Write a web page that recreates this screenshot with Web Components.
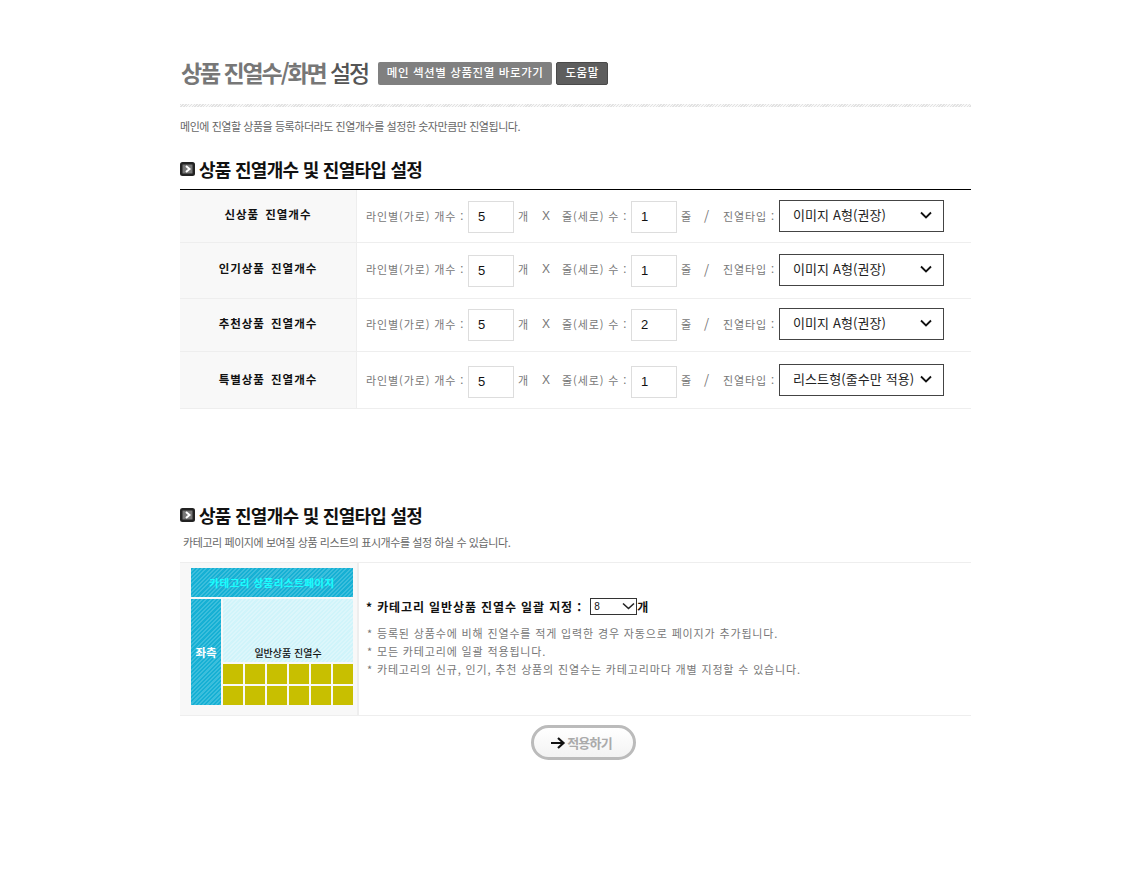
<!DOCTYPE html>
<html lang="ko">
<head>
<meta charset="utf-8">
<title>상품 진열수/화면 설정</title>
<style>
	html, body { margin: 0; background: #fff; }
	body { font-family: "Noto Sans CJK KR", sans-serif; font-size: 11px; color: #666; }
	display-settings { display: block; width: 791px; margin: 0 0 0 180px; padding-top: 58px; }
</style>
</head>
<body>
<display-settings>
	<page-title>
		<span>상품 진열수/화면</span> <b>설정</b>
	</page-title>
	<section-head>상품 진열개수 및 진열타입 설정</section-head>
	<count-row label="신상품 진열개수" a="5" b="1" type="이미지 A형(권장)" h="52"></count-row>
	<count-row label="인기상품 진열개수" a="5" b="1" type="이미지 A형(권장)" h="55" lift="2" np="6"></count-row>
	<count-row label="추천상품 진열개수" a="5" b="2" type="이미지 A형(권장)" h="52" lift="2"></count-row>
	<count-row label="특별상품 진열개수" a="5" b="1" type="리스트형(줄수만 적용)" h="56" drop="4" np="2"></count-row>
	<section-head second>상품 진열개수 및 진열타입 설정</section-head>
	<category-box></category-box>
	<apply-button>적용하기</apply-button>
</display-settings>

<script>
class PageTitle extends HTMLElement {
	connectedCallback() {
		this.attachShadow({ mode: 'open' })
		this.shadowRoot.innerHTML = `
		<style>
			:host { display: block; }
			.top { display: flex; align-items: center; height: 30px; }
			h1 { margin: -2px 10px 0 1px; font-size: 23px; font-weight: 700; letter-spacing: -2.1px; color: #777; line-height: 30px; white-space: nowrap; }
			::slotted(b) { font-weight: 500; color: #555; }
			.btn { height: 23px; line-height: 21px; box-sizing: border-box; border-radius: 2px; color: #fff; font-size: 11.5px; font-weight: 500; text-align: center; background: #808080; letter-spacing: .6px; white-space: nowrap; }
			.b1 { width: 174px; }
			.b2 { width: 52px; margin-left: 4px; background: #5e5e5e; border: 1px solid #4a4a4a; line-height: 19px; letter-spacing: .5px; }
			.dots { height: 3px; margin-top: 16px; background: repeating-linear-gradient(135deg, #e2e2e2 0 1px, #f8f8f8 1px 2px); }
			p { margin: 11px 0 0; font-size: 11px; line-height: 16px; letter-spacing: -.45px; color: #666; }
		</style>
		<div class="top">
			<h1><slot></slot></h1>
			<div class="btn b1">메인 섹션별 상품진열 바로가기</div>
			<div class="btn b2">도움말</div>
		</div>
		<div class="dots"></div>
		<p>메인에 진열할 상품을 등록하더라도 진열개수를 설정한 숫자만큼만 진열됩니다.</p>`
	}
}
class SectionHead extends HTMLElement {
	connectedCallback() {
		this.attachShadow({ mode: 'open' })
		const second = this.hasAttribute('second')
		this.shadowRoot.innerHTML = `
		<style>
			:host { display: block; margin-top: ${second ? 93 : 22}px; }
			.head { display: flex; align-items: center; height: 26px; gap: 4px; }
			svg { flex: none; }
			h2 { margin: 0; font-size: 18px; font-weight: 700; letter-spacing: -.72px; color: #111; line-height: 26px; }
			.rule { height: 1px; background: #000; margin-top: 7px; }
			p { margin: 6px 0 12px 3px; font-size: 11px; line-height: 16px; letter-spacing: -.42px; color: #666; }
		</style>
		<div class="head">
			<svg width="15" height="14" viewBox="0 0 15 14"><rect width="15" height="14" rx="2.5" fill="#222"/><rect x="2.5" y="2.5" width="10" height="9" fill="#777"/><path d="M6 4l3.5 3L6 10" fill="none" stroke="#fff" stroke-width="2"/></svg>
			<h2><slot></slot></h2>
		</div>
		${second ? '<p>카테고리 페이지에 보여질 상품 리스트의 표시개수를 설정 하실 수 있습니다.</p>' : '<div class="rule"></div>'}`
	}
}
class NumBox extends HTMLElement {
	connectedCallback() {
		this.attachShadow({ mode: 'open' })
		this.shadowRoot.innerHTML = `
		<style>
			:host { display: block; flex: none; width: 46px; height: 32px; box-sizing: border-box; border: 1px solid #ddd; font: 13px "Liberation Sans", sans-serif; color: #111; line-height: 29px; padding: 0 0 0 9px; letter-spacing: 0; }
		</style><slot></slot>`
	}
}
class TypeSelect extends HTMLElement {
	connectedCallback() {
		this.attachShadow({ mode: 'open' })
		this.shadowRoot.innerHTML = `
		<style>
			:host { display: flex; flex: none; align-items: center; justify-content: space-between; width: 165px; height: 32px; box-sizing: border-box; border: 1px solid #444; padding: 0 11px 0 13px; font-size: 13px; color: #222; white-space: nowrap; letter-spacing: .1px; }
			span { margin-top: -3px; }
			svg { flex: none; margin-left: 2px; margin-top: -2px; }
		</style>
		<span><slot></slot></span>
		<svg width="12" height="8" viewBox="0 0 12 8"><path d="M1 1.5l5 5 5-5" fill="none" stroke="#111" stroke-width="1.8"/></svg>`
	}
}
class CountRow extends HTMLElement {
	connectedCallback() {
		this.attachShadow({ mode: 'open' })
		const g = n => this.getAttribute(n)
		const drop = g('drop') || 2
		this.shadowRoot.innerHTML = `
		<style>
			:host { display: flex; height: ${g('h')}px; box-sizing: content-box; border-bottom: 1px solid #eee; }
			.name { flex: none; width: 177px; box-sizing: border-box; background: #f8f8f8; border-right: 1px solid #eee; text-align: center; font-size: 11.5px; font-weight: 700; color: #111; letter-spacing: .95px; display: flex; align-items: center; justify-content: center; padding-bottom: ${g('np') || 4}px; word-spacing: 2px; }
			.cells { display: flex; align-items: center; padding: 0 0 ${g('lift') || 0}px 9px; font-size: 11px; letter-spacing: .9px; color: #777; white-space: nowrap; }
			.cells > span { margin-top: -1px; }
			num-box { margin-top: ${drop}px; }
			.l1 { width: 102px; }
			.u1 { margin-left: 4px; width: 24px; }
			.x { width: 20px; font: 300 12px "Liberation Sans", sans-serif; letter-spacing: 0; }
			.l2 { width: 69px; }
			.u2 { margin-left: 4px; width: 23px; }
			.s { width: 19px; font-size: 13px; }
			.l3 { width: 56px; }
		</style>
		<div class="name">${g('label')}</div>
		<div class="cells">
			<span class="l1">라인별(가로) 개수 :</span><num-box>${g('a')}</num-box>
			<span class="u1">개</span><span class="x">X</span>
			<span class="l2">줄(세로) 수 :</span><num-box>${g('b')}</num-box>
			<span class="u2">줄</span><span class="s">/</span>
			<span class="l3">진열타입 :</span><type-select>${g('type')}</type-select>
		</div>`
	}
}
class LayoutDiagram extends HTMLElement {
	connectedCallback() {
		this.attachShadow({ mode: 'open' })
		const cells = Array(12).fill('<i></i>').join('')
		this.shadowRoot.innerHTML = `
		<style>
			:host { display: grid; width: 162px; height: 137px; grid-template-columns: 30px 1fr; grid-template-rows: 29px 1fr; gap: 2px; color: #fff; font-size: 11.5px; font-weight: 700; }
			.blue { background: repeating-linear-gradient(135deg, #16b0d4 0 1.5px, #3cbedc 1.5px 3px); display: flex; align-items: center; justify-content: center; }
			.top { grid-column: 1 / 3; color: #19ffff; font-size: 10.5px; letter-spacing: .5px; }
			.main { display: grid; grid-template-rows: 63px 1fr; gap: 2px; }
			.light { background: repeating-linear-gradient(135deg, #d0f4fa 0 1.5px, #dcf6fb 1.5px 3px); color: #111; font-weight: 500; font-size: 10px; display: flex; align-items: flex-end; justify-content: center; padding-bottom: 2px; }
			.grid { display: grid; grid-template-columns: repeat(6, 1fr); grid-template-rows: 1fr 1fr; gap: 2px; }
			i { background: #c8bf00; display: block; }
		</style>
		<div class="blue top">카테고리 상품리스트페이지</div>
		<div class="blue left">좌측</div>
		<div class="main">
			<div class="light">일반상품 진열수</div>
			<div class="grid">${cells}</div>
		</div>`
	}
}
class CategoryBox extends HTMLElement {
	connectedCallback() {
		this.attachShadow({ mode: 'open' })
		this.shadowRoot.innerHTML = `
		<style>
			:host { display: flex; height: 152px; border-top: 1px solid #eee; border-bottom: 1px solid #eee; }
			.pic { flex: none; width: 179px; box-sizing: border-box; background: #f8f8f8; border-right: 2px solid #eee; padding: 5px 0 0 11px; }
			.info { padding: 34px 0 0 8px; }
			.set { display: flex; align-items: center; height: 18px; margin-left: -1px; font-size: 12px; font-weight: 700; color: #111; letter-spacing: .88px; white-space: pre; }
			.pick { display: flex; align-items: center; justify-content: space-between; width: 47px; height: 17px; box-sizing: border-box; border: 1px solid #333; padding: 0 1px 0 3px; margin-left: 4px; font: 10px "Liberation Sans", sans-serif; color: #111; letter-spacing: 0; }
			ul { list-style: none; margin: 9px 0 0; padding: 0; font-size: 11px; line-height: 18px; letter-spacing: .85px; color: #777; white-space: nowrap; }
		</style>
		<div class="pic"><layout-diagram></layout-diagram></div>
		<div class="info">
			<div class="set">* 카테고리 일반상품 진열수 일괄 지정 : <span class="pick">8<svg width="13" height="8" viewBox="0 0 13 8"><path d="M1 1.5l5.5 5 5.5-5" fill="none" stroke="#222" stroke-width="1.6"/></svg></span>개</div>
			<ul>
				<li>* 등록된 상품수에 비해 진열수를 적게 입력한 경우 자동으로 페이지가 추가됩니다.</li>
				<li>* 모든 카테고리에 일괄 적용됩니다.</li>
				<li>* 카테고리의 신규, 인기, 추천 상품의 진열수는 카테고리마다 개별 지정할 수 있습니다.</li>
			</ul>
		</div>`
	}
}
class ApplyButton extends HTMLElement {
	connectedCallback() {
		this.attachShadow({ mode: 'open' })
		this.shadowRoot.innerHTML = `
		<style>
			:host { display: flex; align-items: center; justify-content: center; gap: 1px; width: 105px; height: 35px; box-sizing: border-box; margin: 9px 0 0 351px; border: 3px solid #bbb; border-radius: 18px; padding-right: 5px; background: linear-gradient(#fff, #f3f3f3); font-size: 13px; font-weight: 700; letter-spacing: -.8px; color: #aaa; }
		</style>
		<svg width="16" height="14" viewBox="0 0 16 14"><path d="M1 7h12M8 2l5.5 5L8 12" fill="none" stroke="#111" stroke-width="2.2"/></svg>
		<slot></slot>`
	}
}
customElements.define('page-title', PageTitle)
customElements.define('section-head', SectionHead)
customElements.define('num-box', NumBox)
customElements.define('type-select', TypeSelect)
customElements.define('count-row', CountRow)
customElements.define('layout-diagram', LayoutDiagram)
customElements.define('category-box', CategoryBox)
customElements.define('apply-button', ApplyButton)
</script>
</body>
</html>
